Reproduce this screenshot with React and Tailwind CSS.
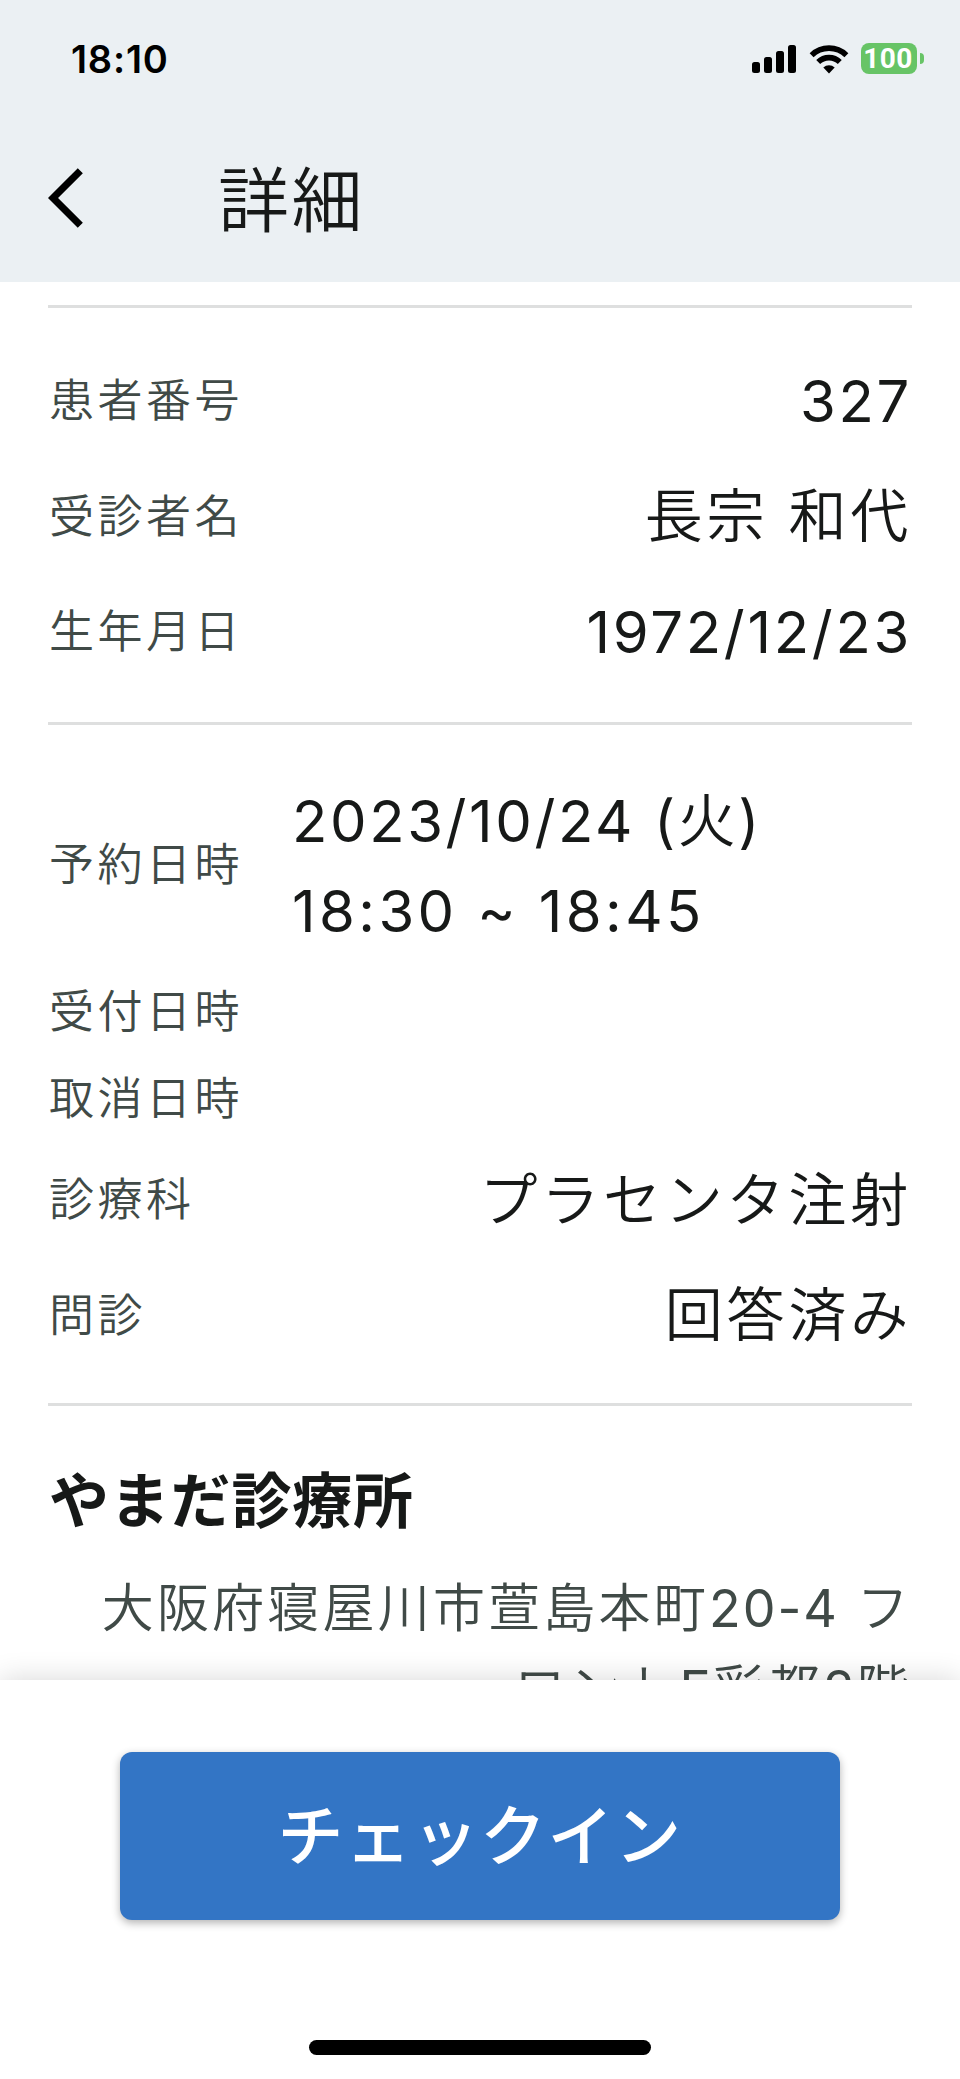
import React from 'react';

const patientRows = [
  { label: '患者番号', value: '327', numeric: true },
  { label: '受診者名', value: '長宗 和代' },
  { label: '生年月日', value: '1972/12/23', numeric: true },
];

const visitRows = [
  { label: '診療科', value: 'プラセンタ注射' },
  { label: '問診', value: '回答済み' },
];

const StatusBar = () => (
  <div className="flex h-[117px] items-center justify-between pl-[71px] pr-[36px]">
    <span className="text-[38px] font-semibold leading-none tracking-[0.8px] text-black">18:10</span>
    <div className="flex items-center">
      <svg width="45" height="28" viewBox="0 0 45 28" fill="#000">
        <rect x="0" y="17" width="8" height="11" rx="2.5" />
        <rect x="12" y="12" width="8" height="16" rx="2.5" />
        <rect x="24" y="6" width="8" height="22" rx="2.5" />
        <rect x="36" y="0" width="8" height="28" rx="2.5" />
      </svg>
      <svg className="ml-3" width="40" height="30" viewBox="0 0 40 30">
        <g fill="none" stroke="#000" strokeWidth="5.6">
          <path d="M2.6 11.2 A25 25 0 0 1 37.4 11.2" />
          <path d="M9.2 18 A15.4 15.4 0 0 1 30.8 18" />
        </g>
        <path d="M20 29.5 L14.3 23.6 A8.2 8.2 0 0 1 25.7 23.6 Z" fill="#000" />
      </svg>
      <div className="ml-3 flex h-[31px] w-[56px] items-center justify-center rounded-lg bg-[#67c466] pr-[2px] font-['Roboto',sans-serif] text-[28px] font-bold leading-none tracking-[0.4px] text-white">
        100
      </div>
      <div className="ml-[3px] h-[11px] w-[4px] rounded-r-full bg-[#67c466]" />
    </div>
  </div>
);

const Header = () => (
  <header className="h-[282px] bg-[#ebf0f3]">
    <StatusBar />
    <div className="flex h-[165px] items-center pl-[48px]">
      <button className="mb-[3px]">
        <svg width="36" height="60" viewBox="0 0 36 60" fill="none" stroke="#000" strokeWidth="7.2">
          <path d="M32.3 2.7 L5 30 L32.3 57.3" />
        </svg>
      </button>
      <h1 className="ml-[134px] pt-[2px] text-[71px] font-[350] leading-none tracking-[2.4px]">詳細</h1>
    </div>
  </header>
);

const Label = ({ children }) => (
  <span className="text-[45px] font-[350] leading-none tracking-[3.5px] text-[#404a47]">{children}</span>
);

const Row = ({ label, value, numeric }) => (
  <div className="flex h-[115.5px] items-center justify-between pl-px pt-[2px]">
    <Label>{label}</Label>
    <span
      className={`text-[58px] leading-none ${
        numeric ? 'font-[380] tracking-[2.7px]' : 'font-[350] tracking-[3.8px]'
      }`}
    >
      {value}
    </span>
  </div>
);

const App = () => (
  <div
    lang="ja"
    className="flex h-[2079px] w-[960px] flex-col overflow-hidden bg-white font-['Inter','Noto_Sans_CJK_JP',sans-serif] text-[#171918]"
  >
    <Header />

    <main className="h-[1397.5px] overflow-hidden px-12 pt-[23px]">
      <section className="h-[417px] border-t-[3px] border-[#dedfdf] pt-[34px]">
        {patientRows.map((row) => (
          <Row key={row.label} {...row} />
        ))}
      </section>

      <section className="h-[681px] border-t-[3px] border-[#dedfdf] pt-[39px]">
        <div className="flex h-[201px] items-center pl-px">
          <div className="w-[243px]">
            <Label>予約日時</Label>
          </div>
          <div className="pt-[2px] text-[58px] font-[380] leading-[90px]">
            <p className="tracking-[2.6px]">
              2023/10/24 (<span className="font-[350]">火</span>)
            </p>
            <p className="tracking-[3.4px]">18:30 ~ 18:45</p>
          </div>
        </div>
        <div className="mt-[3px] flex h-[87px] items-center pl-px">
          <Label>受付日時</Label>
        </div>
        <div className="mb-[-1px] flex h-[87px] items-center pl-px">
          <Label>取消日時</Label>
        </div>
        {visitRows.map((row) => (
          <Row key={row.label} {...row} />
        ))}
      </section>

      <section className="border-t-[3px] border-[#dedfdf] pt-[65px]">
        <h2 className="pl-px text-[60px] font-bold leading-[60px] tracking-[0.8px]">やまだ診療所</h2>
        <p className="mt-[38px] text-right text-[52px] font-[350] leading-[80.5px] tracking-[3.2px] text-[#404a47]">
          大阪府寝屋川市萱島本町
          <span className="font-[380] tracking-[2px]">20-4</span> フ
          <br />
          ロント<span className="font-[380] tracking-[2px]">E</span>彩都
          <span className="font-[380] tracking-[2px]">2</span>階
        </p>
      </section>
    </main>

    {/* Fixed footer with the check-in action */}
    <footer className="relative flex flex-1 flex-col items-center bg-white pt-[72.5px] shadow-[0_0_28px_rgba(0,0,0,0.16)]">
      <button className="h-[168px] w-[720px] rounded-xl bg-[#3375c5] text-[66px] font-medium tracking-[1.5px] text-white shadow-[0_3px_8px_rgba(0,0,0,0.3)]">
        チェックイン
      </button>
      <div className="mt-[120px] h-[15px] w-[342px] rounded-full bg-black" />
    </footer>
  </div>
);

export default App;
